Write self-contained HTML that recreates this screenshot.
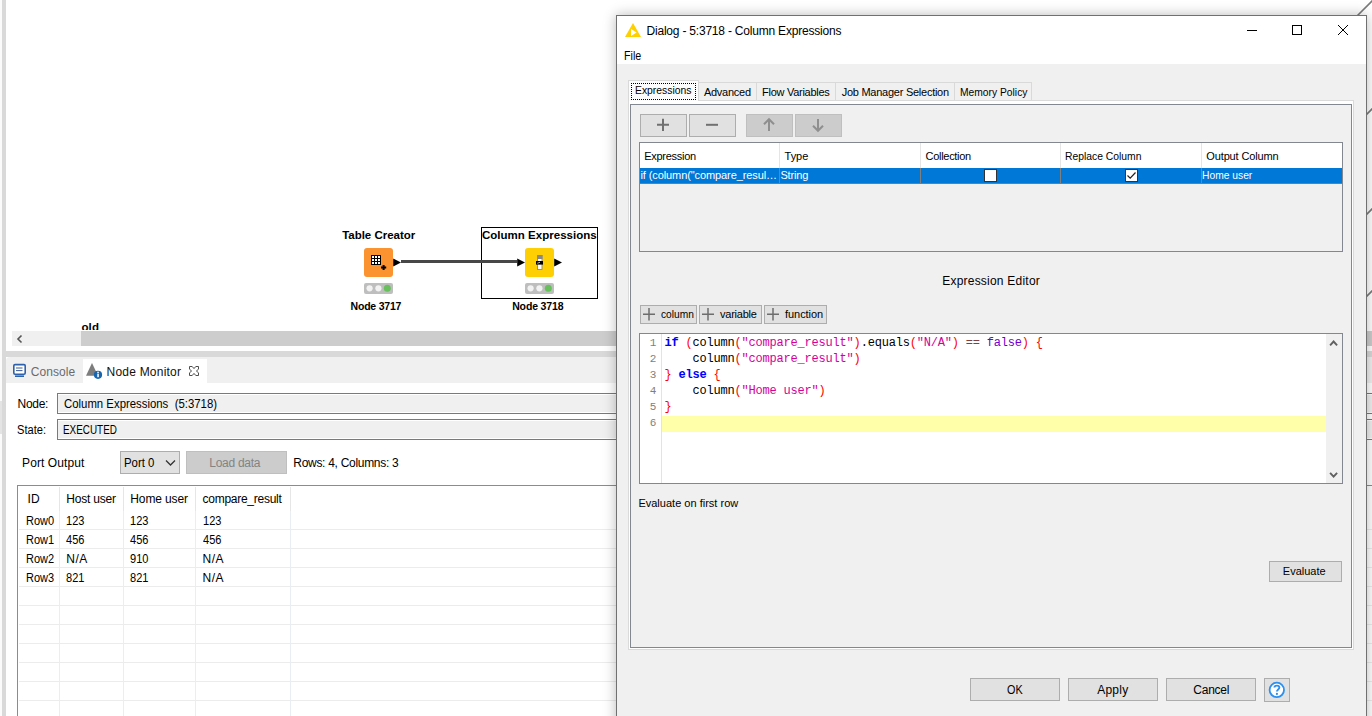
<!DOCTYPE html>
<html><head><meta charset="utf-8">
<style>
*{box-sizing:border-box;margin:0;padding:0}
html,body{width:1372px;height:716px;overflow:hidden;background:#fff;font-family:"Liberation Sans",sans-serif;font-size:12px;color:#000;position:relative}
.a{position:absolute}
.t{position:absolute;white-space:pre;line-height:1}
svg.a{overflow:visible}
</style></head><body>
<div class="a" style="left:0px;top:0px;width:2px;height:716px;background:#fbfbfb"></div>
<div class="a" style="left:2px;top:0px;width:4px;height:716px;background:#d9d9d9"></div>
<div class="a" style="left:0px;top:401px;width:2px;height:33px;background:#e4e4e4"></div>
<div class="a" style="left:481px;top:227px;width:117px;height:72px;border:1px solid #000"></div>
<div class="a" style="left:364px;top:248px;width:29px;height:29px;background:#fb9330;border-radius:3px"></div>
<div class="a" style="left:525px;top:248px;width:29px;height:29px;background:#fecf02;border-radius:3px"></div>
<div class="a" style="left:401px;top:260px;width:116px;height:3px;background:#474747"></div>
<svg class="a" style="left:393px;top:258px" width="10" height="10"><path d="M0.2 0.6 L8 4.6 L0.2 8.6 Z" fill="#000"/></svg>
<svg class="a" style="left:517px;top:258px" width="10" height="10"><path d="M0.2 0.6 L8 4.6 L0.2 8.6 Z" fill="#000"/></svg>
<svg class="a" style="left:554px;top:258px" width="10" height="10"><path d="M0.2 0.6 L8 4.6 L0.2 8.6 Z" fill="#000"/></svg>
<div class="a" style="left:364px;top:283px;width:29px;height:11px;background:#bebebe;border-radius:2px"></div>
<svg class="a" style="left:364px;top:283px" width="29" height="11"><circle cx="5.6" cy="5.3" r="3.1" fill="#f2f2f2"/><circle cx="14.4" cy="5.3" r="3.1" fill="#f2f2f2"/><circle cx="23.3" cy="5.3" r="3.5" fill="#68c05c"/></svg>
<div class="a" style="left:525px;top:283px;width:29px;height:11px;background:#bebebe;border-radius:2px"></div>
<svg class="a" style="left:525px;top:283px" width="29" height="11"><circle cx="5.6" cy="5.3" r="3.1" fill="#f2f2f2"/><circle cx="14.4" cy="5.3" r="3.1" fill="#f2f2f2"/><circle cx="23.3" cy="5.3" r="3.5" fill="#68c05c"/></svg>
<svg class="a" style="left:364px;top:248px" width="29" height="29"><rect x="7" y="7" width="10" height="10" fill="#000"/><path d="M8 8h2v2h-2zM11 8h2v2h-2zM14 8h2v2h-2zM8 11h2v2h-2zM11 11h2v2h-2zM14 11h2v2h-2zM8 14h2v2h-2zM11 14h2v2h-2zM14 14h2v2h-2z" fill="#fff"/><path d="M19.6 17V22M17 19.5H22.2" stroke="#000" stroke-width="2"/></svg>
<svg class="a" style="left:525px;top:248px" width="29" height="29"><rect x="12.5" y="7.5" width="4.5" height="14" fill="#fff" stroke="#8a8a8a" stroke-width="0.9"/><rect x="12" y="7" width="5.5" height="4" fill="#888"/><rect x="11" y="13" width="7" height="3.6" fill="#000"/><path d="M12.3 15.2 L13.5 14.8 L15 14.2" stroke="#fff" stroke-width="0.8" fill="none"/></svg>
<div class="t" style="left:81.5px;top:322px;font-size:11.5px;font-weight:bold;letter-spacing:0.1px">old</div>
<div class="a" style="left:6px;top:330px;width:1366px;height:16px;background:#fff"></div>
<div class="a" style="left:12px;top:331px;width:69px;height:15px;background:#f0f0f0"></div>
<div class="a" style="left:81px;top:331px;width:1291px;height:15px;background:#cdcdcd"></div>
<svg class="a" style="left:15px;top:334px" width="10" height="10"><path d="M6.5 1.5 L3 5 L6.5 8.5" fill="none" stroke="#555" stroke-width="1.6"/></svg>
<div class="a" style="left:6px;top:346px;width:1366px;height:5px;background:#fff"></div>
<div class="a" style="left:6px;top:351px;width:1366px;height:6px;background:#d9d9d9"></div>
<div class="a" style="left:6px;top:357px;width:1366px;height:26px;background:#f0f0f0;border-top-left-radius:4px"></div>
<div class="a" style="left:83px;top:359px;width:124px;height:24px;background:#fff"></div>
<div class="a" style="left:6px;top:383px;width:1366px;height:333px;background:#fff"></div>
<svg class="a" style="left:12px;top:363px" width="16" height="16"><rect x="1.8" y="1.6" width="11.4" height="9.6" rx="1.2" fill="#fff" stroke="#2f62ad" stroke-width="1.6"/><path d="M4 5H10.5M4 7.6H10.5" stroke="#3b5a9a" stroke-width="1"/><path d="M3 13.2H12" stroke="#2f62ad" stroke-width="1.6"/></svg>
<svg class="a" style="left:85px;top:362px" width="18" height="18"><path d="M1 13.8 L7 1 L13 13.8 Z" fill="#7d7d7d"/><circle cx="13" cy="12.8" r="4.1" fill="#1565b0"/><rect x="12.3" y="11.6" width="1.5" height="3.6" fill="#fff"/><rect x="12.3" y="9.7" width="1.5" height="1.3" fill="#fff"/></svg>
<svg class="a" style="left:189px;top:366px" width="11" height="11"><path d="M0.5 0.5H3.2L5 2.6L6.8 0.5H9.5V3.2L7.4 5L9.5 6.8V9.5H6.8L5 7.4L3.2 9.5H0.5V6.8L2.6 5L0.5 3.2Z" fill="none" stroke="#4d4d4d" stroke-width="1"/></svg>
<div class="a" style="left:57px;top:393px;width:1320px;height:21px;background:#f0f0f0;border:1px solid #7a7a7a;box-shadow:inset 0 1px 0 #fff,inset 0 -1px 0 #fff"></div>
<div class="a" style="left:57px;top:419px;width:1320px;height:21px;background:#f0f0f0;border:1px solid #7a7a7a;box-shadow:inset 0 1px 0 #fff,inset 0 -1px 0 #fff"></div>
<div class="a" style="left:120px;top:451px;width:60px;height:23px;background:#e1e1e1;border:1px solid #adadad"></div>
<svg class="a" style="left:165px;top:459px" width="12" height="8"><path d="M1 1.5 L5.5 6 L10 1.5" fill="none" stroke="#333" stroke-width="1.25"/></svg>
<div class="a" style="left:186px;top:451px;width:101px;height:23px;background:#cccccc;border:1px solid #bfbfbf"></div>
<div class="a" style="left:17px;top:485px;width:1360px;height:231px;border-left:1px solid #8c8c8c;border-top:1px solid #8c8c8c;background:#fff"></div>
<div class="a" style="left:19px;top:529px;width:1353px;height:1px;background:#ececec"></div>
<div class="a" style="left:19px;top:548px;width:1353px;height:1px;background:#ececec"></div>
<div class="a" style="left:19px;top:567px;width:1353px;height:1px;background:#ececec"></div>
<div class="a" style="left:19px;top:586px;width:1353px;height:1px;background:#ececec"></div>
<div class="a" style="left:19px;top:605px;width:1353px;height:1px;background:#ececec"></div>
<div class="a" style="left:19px;top:624px;width:1353px;height:1px;background:#ececec"></div>
<div class="a" style="left:19px;top:643px;width:1353px;height:1px;background:#ececec"></div>
<div class="a" style="left:19px;top:662px;width:1353px;height:1px;background:#ececec"></div>
<div class="a" style="left:19px;top:681px;width:1353px;height:1px;background:#ececec"></div>
<div class="a" style="left:19px;top:700px;width:1353px;height:1px;background:#ececec"></div>
<div class="a" style="left:59px;top:487px;width:1px;height:24px;background:#e6e6e6"></div>
<div class="a" style="left:59px;top:511px;width:1px;height:205px;background:#e9eef4"></div>
<div class="a" style="left:123px;top:487px;width:1px;height:24px;background:#e6e6e6"></div>
<div class="a" style="left:123px;top:511px;width:1px;height:205px;background:#e9eef4"></div>
<div class="a" style="left:195px;top:487px;width:1px;height:24px;background:#e6e6e6"></div>
<div class="a" style="left:195px;top:511px;width:1px;height:205px;background:#e9eef4"></div>
<div class="a" style="left:290px;top:487px;width:1px;height:24px;background:#e6e6e6"></div>
<div class="a" style="left:290px;top:511px;width:1px;height:205px;background:#e9eef4"></div>
<svg class="a" style="left:1340px;top:0px" width="40" height="320"><path d="M16 17 L34 -1 M24 117 L34 107 M24 217 L34 207 M24 299 L34 289" stroke="#7a7a7a" stroke-width="1.6"/></svg>
<div class="a" style="left:616px;top:15px;width:751px;height:716px;background:#f0f0f0;border:1px solid #707070;box-shadow:0 0 12px rgba(0,0,0,0.28)"></div>
<div class="a" style="left:617px;top:16px;width:749px;height:48px;background:#fff"></div>
<svg class="a" style="left:624px;top:22px" width="18" height="16"><path d="M9 1 L17 15 L1 15 Z" fill="#ffd000"/><path d="M7 6.9 L12.6 10.4 L7 14 Z" fill="#fff"/></svg>
<svg class="a" style="left:1246px;top:24px" width="60" height="12"><path d="M1 6.5H11" stroke="#000" stroke-width="1"/><rect x="46.5" y="1.5" width="9" height="9" fill="none" stroke="#000" stroke-width="1"/></svg>
<svg class="a" style="left:1337px;top:24px" width="12" height="12"><path d="M1 1 L11 11 M11 1 L1 11" stroke="#000" stroke-width="1"/></svg>
<div class="a" style="left:628px;top:100px;width:726px;height:550px;background:#dadada"></div>
<div class="a" style="left:629px;top:101px;width:724px;height:548px;background:#fff"></div>
<div class="a" style="left:630px;top:104px;width:722px;height:544px;background:#f0f0f0;border:1px solid #828790"></div>
<div class="a" style="left:628px;top:80px;width:71px;height:21px;background:#fcfcfc;border:1px solid #d9d9d9;border-bottom:none"></div>
<div class="a" style="left:631px;top:83px;width:65px;height:17px;border:1px dotted #000"></div>
<div class="a" style="left:698px;top:82px;width:59px;height:18px;background:#f0f0f0;border:1px solid #d9d9d9;border-bottom:none"></div>
<div class="a" style="left:756px;top:82px;width:80px;height:18px;background:#f0f0f0;border:1px solid #d9d9d9;border-bottom:none"></div>
<div class="a" style="left:835px;top:82px;width:120px;height:18px;background:#f0f0f0;border:1px solid #d9d9d9;border-bottom:none"></div>
<div class="a" style="left:954px;top:82px;width:78px;height:18px;background:#f0f0f0;border:1px solid #d9d9d9;border-bottom:none"></div>
<div class="a" style="left:640px;top:114px;width:47px;height:23px;background:#e1e1e1;border:1px solid #adadad"></div>
<div class="a" style="left:689px;top:114px;width:47px;height:23px;background:#e1e1e1;border:1px solid #adadad"></div>
<div class="a" style="left:746px;top:114px;width:47px;height:23px;background:#cccccc;border:1px solid #bfbfbf"></div>
<div class="a" style="left:795px;top:114px;width:47px;height:23px;background:#cccccc;border:1px solid #bfbfbf"></div>
<svg class="a" style="left:640px;top:114px" width="202" height="23"><path d="M23 4.8V17M17 10.8H29" stroke="#707070" stroke-width="2"/><path d="M66 10.8H78" stroke="#707070" stroke-width="2"/><path d="M129 5.5V17M124 10.2L129 5.2L134 10.2" fill="none" stroke="#8f8f8f" stroke-width="2"/><path d="M178 5V16.5M173 11.8L178 16.8L183 11.8" fill="none" stroke="#8f8f8f" stroke-width="2"/></svg>
<div class="a" style="left:639px;top:142px;width:704px;height:110px;background:#f0f0f0;border:1px solid #828790"></div>
<div class="a" style="left:640px;top:143px;width:702px;height:25px;background:#fff"></div>
<div class="a" style="left:779px;top:143px;width:1px;height:25px;background:#e5e5e5"></div>
<div class="a" style="left:920px;top:143px;width:1px;height:25px;background:#e5e5e5"></div>
<div class="a" style="left:1060px;top:143px;width:1px;height:25px;background:#e5e5e5"></div>
<div class="a" style="left:1201px;top:143px;width:1px;height:25px;background:#e5e5e5"></div>
<div class="a" style="left:640px;top:168px;width:702px;height:15px;background:#0078d7"></div>
<div class="a" style="left:640px;top:183px;width:702px;height:1px;background:#7a7a7a"></div>
<div class="a" style="left:779px;top:168px;width:1px;height:15px;background:#7f7f7f"></div>
<div class="a" style="left:920px;top:168px;width:1px;height:15px;background:#7f7f7f"></div>
<div class="a" style="left:1060px;top:168px;width:1px;height:15px;background:#7f7f7f"></div>
<div class="a" style="left:1201px;top:168px;width:1px;height:15px;background:#7f7f7f"></div>
<div class="a" style="left:984px;top:169px;width:13px;height:13px;background:#fff;border:1px solid #333"></div>
<div class="a" style="left:1125px;top:169px;width:13px;height:13px;background:#fff;border:1px solid #333"></div>
<svg class="a" style="left:1125px;top:169px" width="13" height="13"><path d="M2.5 6.5 L5.2 9.2 L10.5 3.5" fill="none" stroke="#222" stroke-width="1.2"/></svg>
<div class="a" style="left:640px;top:305px;width:57px;height:19px;background:#e1e1e1;border:1px solid #adadad"></div>
<svg class="a" style="left:640px;top:305px" width="20" height="19"><path d="M9 3V15.5M3 9.25H15" stroke="#6d6d6d" stroke-width="1.5"/></svg>
<div class="a" style="left:699px;top:305px;width:63px;height:19px;background:#e1e1e1;border:1px solid #adadad"></div>
<svg class="a" style="left:699px;top:305px" width="20" height="19"><path d="M9 3V15.5M3 9.25H15" stroke="#6d6d6d" stroke-width="1.5"/></svg>
<div class="a" style="left:764px;top:305px;width:63px;height:19px;background:#e1e1e1;border:1px solid #adadad"></div>
<svg class="a" style="left:764px;top:305px" width="20" height="19"><path d="M9 3V15.5M3 9.25H15" stroke="#6d6d6d" stroke-width="1.5"/></svg>
<div class="a" style="left:639px;top:333px;width:704px;height:151px;background:#fff;border:1px solid #828790"></div>
<div class="a" style="left:661px;top:334px;width:1px;height:149px;background:#e3e3e3"></div>
<div class="a" style="left:662px;top:416px;width:664px;height:16px;background:#ffffaa"></div>
<div class="a" style="left:1326px;top:334px;width:16px;height:149px;background:#f0f0f0"></div>
<svg class="a" style="left:1326px;top:338px" width="16" height="10"><path d="M4.1 7.3 L7.6 3.5 L11.1 7.3" fill="none" stroke="#606060" stroke-width="1.9"/></svg>
<svg class="a" style="left:1326px;top:469px" width="16" height="10"><path d="M4.1 3.8 L7.6 7.6 L11.1 3.8" fill="none" stroke="#606060" stroke-width="1.9"/></svg>
<div class="t" style="left:664.5px;top:337px;font-family:'Liberation Mono',monospace;font-size:12px;letter-spacing:-0.2px"><span style="color:#0000ff;font-weight:bold">if</span> <span style="color:#ff0000">(</span>column<span style="color:#ff0000">(</span><span style="color:#d4009a">"compare_result"</span><span style="color:#ff0000">)</span>.equals<span style="color:#ff0000">(</span><span style="color:#d4009a">"N/A"</span><span style="color:#ff0000">)</span> <span style="color:#804040">==</span> <span style="color:#7000d0">false</span><span style="color:#ff0000">)</span> <span style="color:#ff0000">{</span></div>
<div class="t" style="left:664.5px;top:353px;font-family:'Liberation Mono',monospace;font-size:12px;letter-spacing:-0.2px">    column<span style="color:#ff0000">(</span><span style="color:#d4009a">"compare_result"</span><span style="color:#ff0000">)</span></div>
<div class="t" style="left:664.5px;top:369px;font-family:'Liberation Mono',monospace;font-size:12px;letter-spacing:-0.2px"><span style="color:#ff0000">}</span> <span style="color:#0000ff;font-weight:bold">else</span> <span style="color:#ff0000">{</span></div>
<div class="t" style="left:664.5px;top:385px;font-family:'Liberation Mono',monospace;font-size:12px;letter-spacing:-0.2px">    column<span style="color:#ff0000">(</span><span style="color:#d4009a">"Home user"</span><span style="color:#ff0000">)</span></div>
<div class="t" style="left:664.5px;top:401px;font-family:'Liberation Mono',monospace;font-size:12px;letter-spacing:-0.2px"><span style="color:#ff0000">}</span></div>
<div class="t" style="left:649.8px;top:338px;font-family:'Liberation Mono',monospace;font-size:11px;color:#7f7f7f">1</div>
<div class="t" style="left:649.8px;top:354px;font-family:'Liberation Mono',monospace;font-size:11px;color:#7f7f7f">2</div>
<div class="t" style="left:649.8px;top:370px;font-family:'Liberation Mono',monospace;font-size:11px;color:#7f7f7f">3</div>
<div class="t" style="left:649.8px;top:386px;font-family:'Liberation Mono',monospace;font-size:11px;color:#7f7f7f">4</div>
<div class="t" style="left:649.8px;top:402px;font-family:'Liberation Mono',monospace;font-size:11px;color:#7f7f7f">5</div>
<div class="t" style="left:649.8px;top:418px;font-family:'Liberation Mono',monospace;font-size:11px;color:#7f7f7f">6</div>
<div class="a" style="left:1269px;top:561px;width:73px;height:21px;background:#e1e1e1;border:1px solid #adadad"></div>
<div class="a" style="left:970px;top:678px;width:90px;height:23px;background:#e1e1e1;border:1px solid #adadad"></div>
<div class="a" style="left:1068px;top:678px;width:90px;height:23px;background:#e1e1e1;border:1px solid #adadad"></div>
<div class="a" style="left:1166px;top:678px;width:90px;height:23px;background:#e1e1e1;border:1px solid #adadad"></div>
<div class="a" style="left:1264px;top:678px;width:26px;height:24px;background:#e1e1e1;border:1px solid #adadad"></div>
<svg class="a" style="left:1264px;top:678px" width="26" height="23"><circle cx="12.8" cy="11.9" r="7.2" fill="#fff" stroke="#2b90ef" stroke-width="1.8"/><path d="M10.4 9.6 C10.4 6.9 15.4 6.9 15.4 9.6 C15.4 11.5 12.9 11.5 12.9 13.6" fill="none" stroke="#2b90ef" stroke-width="1.9"/><circle cx="12.9" cy="15.9" r="1.1" fill="#2b90ef"/></svg>
<div class="t" style="left:342.20px;top:230.4px;font-size:11.5px;font-weight:bold;letter-spacing:-0.025px;">Table Creator</div>
<div class="t" style="left:482.00px;top:230.4px;font-size:11.5px;font-weight:bold;letter-spacing:0.018px;">Column Expressions</div>
<div class="t" style="left:350.60px;top:300.5px;font-size:10.5px;font-weight:bold;letter-spacing:-0.223px;">Node 3717</div>
<div class="t" style="left:512.20px;top:300.5px;font-size:10.5px;font-weight:bold;letter-spacing:-0.148px;">Node 3718</div>
<div class="t" style="left:30.80px;top:366px;font-size:12px;color:#6b6b6b;letter-spacing:0.041px;">Console</div>
<div class="t" style="left:106.50px;top:366px;font-size:12px;color:#111;letter-spacing:0.224px;">Node Monitor</div>
<div class="t" style="left:17.60px;top:398px;font-size:12px;letter-spacing:-0.297px;">Node:</div>
<div class="t" style="left:63.50px;top:398px;font-size:12px;transform:scaleX(0.9479);transform-origin:0 0;">Column Expressions  (5:3718)</div>
<div class="t" style="left:16.90px;top:424px;font-size:12px;transform:scaleX(0.9252);transform-origin:0 0;">State:</div>
<div class="t" style="left:63.30px;top:424px;font-size:12px;transform:scaleX(0.8252);transform-origin:0 0;">EXECUTED</div>
<div class="t" style="left:22.10px;top:457px;font-size:12px;letter-spacing:0.087px;">Port Output</div>
<div class="t" style="left:124.30px;top:457px;font-size:12px;transform:scaleX(0.9492);transform-origin:0 0;">Port 0</div>
<div class="t" style="left:209.30px;top:457px;font-size:12px;color:#838383;letter-spacing:-0.289px;">Load data</div>
<div class="t" style="left:293.30px;top:457px;font-size:12px;letter-spacing:-0.296px;">Rows: 4, Columns: 3</div>
<div class="t" style="left:27.40px;top:493px;font-size:12px;letter-spacing:0.266px;">ID</div>
<div class="t" style="left:66.30px;top:493px;font-size:12px;letter-spacing:-0.207px;">Host user</div>
<div class="t" style="left:130.30px;top:493px;font-size:12px;letter-spacing:-0.124px;">Home user</div>
<div class="t" style="left:202.50px;top:493px;font-size:12px;letter-spacing:-0.259px;">compare_result</div>
<div class="t" style="left:25.60px;top:514.7px;font-size:12px;transform:scaleX(0.9160);transform-origin:0 0;">Row0</div>
<div class="t" style="left:66.30px;top:514.7px;font-size:12px;transform:scaleX(0.9190);transform-origin:0 0;">123</div>
<div class="t" style="left:130.30px;top:514.7px;font-size:12px;transform:scaleX(0.9190);transform-origin:0 0;">123</div>
<div class="t" style="left:202.50px;top:514.7px;font-size:12px;transform:scaleX(0.9190);transform-origin:0 0;">123</div>
<div class="t" style="left:25.60px;top:533.7px;font-size:12px;transform:scaleX(0.9160);transform-origin:0 0;">Row1</div>
<div class="t" style="left:66.30px;top:533.7px;font-size:12px;transform:scaleX(0.9190);transform-origin:0 0;">456</div>
<div class="t" style="left:130.30px;top:533.7px;font-size:12px;transform:scaleX(0.9190);transform-origin:0 0;">456</div>
<div class="t" style="left:202.50px;top:533.7px;font-size:12px;transform:scaleX(0.9190);transform-origin:0 0;">456</div>
<div class="t" style="left:25.60px;top:552.7px;font-size:12px;transform:scaleX(0.9160);transform-origin:0 0;">Row2</div>
<div class="t" style="left:66.30px;top:552.7px;font-size:12px;letter-spacing:0.500px;">N/A</div>
<div class="t" style="left:130.30px;top:552.7px;font-size:12px;transform:scaleX(0.9190);transform-origin:0 0;">910</div>
<div class="t" style="left:202.50px;top:552.7px;font-size:12px;letter-spacing:0.500px;">N/A</div>
<div class="t" style="left:25.60px;top:571.7px;font-size:12px;transform:scaleX(0.9160);transform-origin:0 0;">Row3</div>
<div class="t" style="left:66.30px;top:571.7px;font-size:12px;transform:scaleX(0.9190);transform-origin:0 0;">821</div>
<div class="t" style="left:130.30px;top:571.7px;font-size:12px;transform:scaleX(0.9190);transform-origin:0 0;">821</div>
<div class="t" style="left:202.50px;top:571.7px;font-size:12px;letter-spacing:0.500px;">N/A</div>
<div class="t" style="left:646.50px;top:24.6px;font-size:12px;letter-spacing:-0.206px;">Dialog - 5:3718 - Column Expressions</div>
<div class="t" style="left:624.40px;top:49.6px;font-size:12px;transform:scaleX(0.8900);transform-origin:0 0;">File</div>
<div class="t" style="left:635.40px;top:85.2px;font-size:11px;transform:scaleX(0.9418);transform-origin:0 0;">Expressions</div>
<div class="t" style="left:703.90px;top:86.8px;font-size:11px;letter-spacing:-0.258px;">Advanced</div>
<div class="t" style="left:762.10px;top:86.8px;font-size:11px;letter-spacing:-0.279px;">Flow Variables</div>
<div class="t" style="left:841.70px;top:86.8px;font-size:11px;letter-spacing:-0.255px;">Job Manager Selection</div>
<div class="t" style="left:960.40px;top:86.8px;font-size:11px;transform:scaleX(0.9350);transform-origin:0 0;">Memory Policy</div>
<div class="t" style="left:644.20px;top:150.9px;font-size:11px;letter-spacing:-0.277px;">Expression</div>
<div class="t" style="left:784.60px;top:150.9px;font-size:11px;letter-spacing:-0.043px;">Type</div>
<div class="t" style="left:925.50px;top:150.9px;font-size:11px;letter-spacing:-0.287px;">Collection</div>
<div class="t" style="left:1065.10px;top:150.9px;font-size:11px;transform:scaleX(0.9396);transform-origin:0 0;">Replace Column</div>
<div class="t" style="left:1206.30px;top:150.9px;font-size:11px;letter-spacing:-0.130px;">Output Column</div>
<div class="t" style="left:640.50px;top:169.9px;font-size:11px;color:#fff;letter-spacing:-0.100px;">if (column("compare_resul…</div>
<div class="t" style="left:780.40px;top:169.9px;font-size:11px;color:#fff;letter-spacing:-0.164px;">String</div>
<div class="t" style="left:1202.30px;top:169.9px;font-size:11px;transform:scaleX(0.9347);transform-origin:0 0;color:#fff;">Home user</div>
<div class="t" style="left:942.20px;top:274.7px;font-size:12px;letter-spacing:0.222px;">Expression Editor</div>
<div class="t" style="left:660.50px;top:308.5px;font-size:11px;transform:scaleX(0.9281);transform-origin:0 0;">column</div>
<div class="t" style="left:720.00px;top:308.5px;font-size:11px;letter-spacing:-0.243px;">variable</div>
<div class="t" style="left:785.10px;top:308.5px;font-size:11px;letter-spacing:-0.073px;">function</div>
<div class="t" style="left:638.40px;top:497.7px;font-size:11px;letter-spacing:0.009px;">Evaluate on first row</div>
<div class="t" style="left:1282.80px;top:565.5px;font-size:11px;">Evaluate</div>
<div class="t" style="left:1007.40px;top:684px;font-size:12px;transform:scaleX(0.9000);transform-origin:0 0;">OK</div>
<div class="t" style="left:1097.20px;top:684px;font-size:12px;letter-spacing:0.246px;">Apply</div>
<div class="t" style="left:1193.30px;top:684px;font-size:12px;letter-spacing:-0.237px;">Cancel</div>
</body></html>
